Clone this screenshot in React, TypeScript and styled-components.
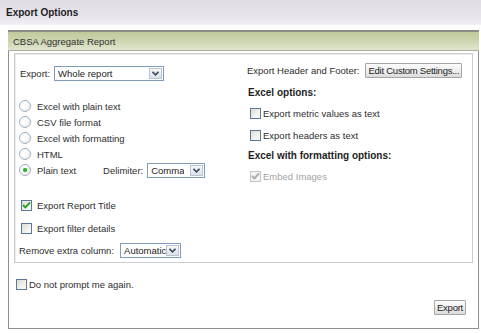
import React from 'react';
import styled, { createGlobalStyle, css } from 'styled-components';

const GlobalStyle = createGlobalStyle`
  html, body { margin: 0; padding: 0; background: #fff; }
  body {
    font-family: "Liberation Sans", Arial, sans-serif;
    font-size: 9.5px;
    color: #2e2e2e;
  }
`;

type TCheck = { checked?: boolean; disabled?: boolean };
type TSelect = { width: number };
type TGap = { top: number };

const CheckBox = ({ checked, disabled }: TCheck) => (
  <CheckBoxBlock disabled={disabled}>
    {checked && (
      <svg width="9" height="8" viewBox="0 0 9 8">
        <path
          d="M1 4 L3.4 6.4 L8 1.4"
          fill="none"
          stroke={disabled ? '#a8a8a8' : '#21a121'}
          strokeWidth="1.8"
        />
      </svg>
    )}
  </CheckBoxBlock>
);

const Select = ({ width, value }: TSelect & { value: string }) => (
  <SelectBlock width={width}>
    <span>{value}</span>
    <SelectArrow>
      <svg width="7" height="5" viewBox="0 0 7 5">
        <path d="M0.5 0.8 L3.5 3.8 L6.5 0.8" fill="none" stroke="#3b4a5e" strokeWidth="1.6" />
      </svg>
    </SelectArrow>
  </SelectBlock>
);

const formats = ['Excel with plain text', 'CSV file format', 'Excel with formatting', 'HTML'];

const App = () => (
  <Page>
    <GlobalStyle />
    <TitleBar>Export Options</TitleBar>
    <Frame>
      <SectionHeader>CBSA Aggregate Report</SectionHeader>
      <InnerBox>
        {/* left */}
        <Column>
          <Row>
            <span>Export:</span>
            <Select width={110} value="Whole report" />
          </Row>

          <RadioList>
            {formats.map((f) => (
              <Row key={f} $h={16}>
                <Radio />
                <span>{f}</span>
              </Row>
            ))}
            <Row $h={16}>
              <Radio checked />
              <span>Plain text</span>
              <DelimiterGroup>
                <span>Delimiter:</span>
                <Select width={58} value="Comma" />
              </DelimiterGroup>
            </Row>
          </RadioList>

          <Gap top={19} />
          <CheckRow>
            <CheckBox checked />
            <span>Export Report Title</span>
          </CheckRow>
          <Gap top={7} />
          <CheckRow>
            <CheckBox />
            <span>Export filter details</span>
          </CheckRow>
          <Gap top={6} />
          <Row className="remove">
            <span>Remove extra column:</span>
            <Select width={61} value="Automatic" />
          </Row>
        </Column>

        {/* right */}
        <Column isRight>
          <Row>
            <span>Export Header and Footer:</span>
            <Button>Edit Custom Settings...</Button>
          </Row>
          <Gap top={7} />
          <GroupTitle>Excel options:</GroupTitle>
          <Gap top={6} />
          <CheckRow tight>
            <CheckBox />
            <span>Export metric values as text</span>
          </CheckRow>
          <Gap top={6} />
          <CheckRow tight>
            <CheckBox />
            <span>Export headers as text</span>
          </CheckRow>
          <Gap top={5} />
          <GroupTitle>Excel with formatting options:</GroupTitle>
          <Gap top={6} />
          <CheckRow tight disabled>
            <CheckBox checked disabled />
            <span>Embed Images</span>
          </CheckRow>
        </Column>
      </InnerBox>

      <Footer>
        <CheckRow tight>
          <CheckBox />
          <span>Do not prompt me again.</span>
        </CheckRow>
        <FooterActions>
          <Button>Export</Button>
        </FooterActions>
      </Footer>
    </Frame>
  </Page>
);
export default App;

// --- Styled Components ---

const Page = styled.div`
  width: 481px;
  height: 333px;
  overflow: hidden;
  background: #fff;
`;

const TitleBar = styled.div`
  height: 25px;
  display: flex;
  align-items: center;
  padding-left: 6px;
  background: linear-gradient(#e1dde5, #e6e3ea 60%, #f1eff3);
  font-size: 10px;
  font-weight: bold;
  color: #1e1e1e;
`;

const Frame = styled.div`
  margin: 5px 2px 0 8px;
  height: 298px;
  border: 1px solid #8f8f8f;
  border-top: none;
  display: flex;
  flex-direction: column;
`;

const SectionHeader = styled.div`
  height: 18px;
  border-top: 2px solid #8a8c82;
  border-bottom: 1px solid #a9ae9e;
  margin: 0 -1px;
  padding-left: 5px;
  display: flex;
  align-items: center;
  background: linear-gradient(#bfca9a, #ccd5b0 50%, #dfe5cf);
  color: #333;
`;

const InnerBox = styled.div`
  margin: 2px 5px 0 5px;
  height: 208px;
  border: 1px solid #cdcdcd;
  box-shadow: inset 1px 1px 0 #ececec;
  display: grid;
  grid-template-columns: 232px 1fr;
`;

const Column = styled.div<{ isRight?: boolean }>`
  display: flex;
  flex-direction: column;
  padding: ${({ isRight }) => (isRight ? '8px 0 0 0' : '11px 0 0 5px')};
`;

const Row = styled.div<{ $h?: number }>`
  display: flex;
  align-items: center;
  column-gap: 4px;
  height: ${({ $h }) => $h ?? 16}px;
  white-space: nowrap;

  &.remove {
    column-gap: 6px;
    margin-left: -1px;
  }
`;

const RadioList = styled.div`
  display: flex;
  flex-direction: column;
  margin-top: 17px;

  ${Row} {
    column-gap: 6px;
  }
`;

const Radio = styled.span<{ checked?: boolean }>`
  box-sizing: border-box;
  width: 12px;
  height: 12px;
  margin-left: -1px;
  border-radius: 50%;
  border: 1px solid #9fb0c3;
  background: radial-gradient(circle at 35% 35%, #ffffff 30%, #e4e4e0);
  display: flex;
  align-items: center;
  justify-content: center;

  ${({ checked }) =>
    checked &&
    css`
      &::after {
        content: '';
        width: 4px;
        height: 4px;
        border-radius: 50%;
        background: #2fb02f;
        box-shadow: 0 0 1px #6fd66f;
      }
    `}
`;

const DelimiterGroup = styled.div`
  display: flex;
  align-items: center;
  column-gap: 4px;
  margin-left: 21px;
`;

const SelectBlock = styled.div<TSelect>`
  box-sizing: border-box;
  width: ${({ width }) => width}px;
  height: 15px;
  border: 1px solid #7f9db9;
  background: #fff;
  display: flex;
  align-items: center;
  justify-content: space-between;
  padding: 0 1px 0 3px;
  color: #222;

  span {
    overflow: hidden;
  }
`;

const SelectArrow = styled.span`
  box-sizing: border-box;
  width: 13px;
  height: 11px;
  border: 1px solid #b8c4d2;
  background: linear-gradient(#f6f7f9, #dde2e8);
  display: flex;
  align-items: center;
  justify-content: center;
  flex-shrink: 0;
`;

const Gap = styled.div<TGap>`
  height: ${({ top }) => top}px;
  flex-shrink: 0;
`;

const CheckRow = styled.div<{ tight?: boolean; disabled?: boolean }>`
  display: flex;
  align-items: center;
  height: 16px;
  column-gap: ${({ tight }) => (tight ? '2px' : '5px')};
  padding-left: ${({ tight }) => (tight ? '3px' : '1px')};
  color: ${({ disabled }) => (disabled ? '#a3a3a3' : 'inherit')};
  white-space: nowrap;
`;

const CheckBoxBlock = styled.span<{ disabled?: boolean }>`
  box-sizing: border-box;
  width: 11px;
  height: 11px;
  border: 1px solid ${({ disabled }) => (disabled ? '#c4c4c4' : '#5b7894')};
  background: ${({ disabled }) =>
    disabled ? '#f4f4f4' : 'linear-gradient(135deg, #dcdcd6, #f2f2ee 60%, #fbfbfa)'};
  display: flex;
  align-items: center;
  justify-content: center;
  flex-shrink: 0;
`;

const GroupTitle = styled.div`
  height: 14px;
  display: flex;
  align-items: center;
  padding-left: 1px;
  font-size: 10px;
  font-weight: bold;
  color: #1e1e1e;
`;

const Button = styled.button`
  box-sizing: border-box;
  height: 15px;
  padding: 0 2px;
  margin-left: 2px;
  border: 1px solid #a5a5a5;
  border-radius: 1px;
  background: linear-gradient(#fbfbfb, #ececec 60%, #dcdcdc);
  font-family: inherit;
  font-size: 9.5px;
  letter-spacing: -0.25px;
  color: #222;
  display: flex;
  align-items: center;
`;

const Footer = styled.div`
  display: flex;
  flex-direction: column;
  padding: 13px 12px 0 4px;
`;

const FooterActions = styled.div`
  display: flex;
  justify-content: flex-end;
  margin-top: 8px;
`;
